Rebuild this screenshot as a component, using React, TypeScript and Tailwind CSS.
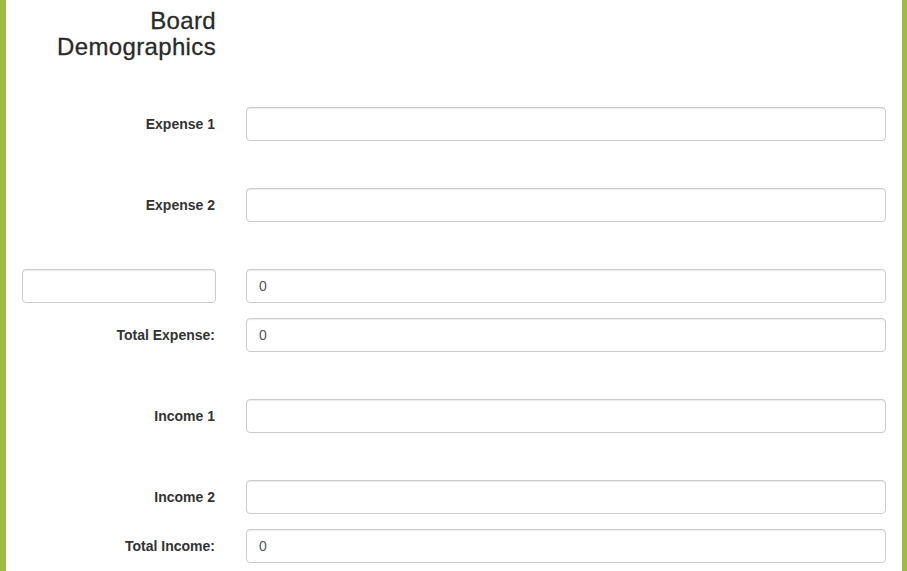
const rows: {
  label?: string;
  value?: string;
  spaced: boolean;
}[] = [
  { label: "Expense 1", spaced: true },
  { label: "Expense 2", spaced: true },
  { value: "0", spaced: true },
  { label: "Total Expense:", value: "0", spaced: false },
  { label: "Income 1", spaced: true },
  { label: "Income 2", spaced: true },
  { label: "Total Income:", value: "0", spaced: false },
];

function Field({ value }: { value?: string }) {
  return (
    <input
      type="text"
      readOnly
      defaultValue={value ?? ""}
      className="h-[34px] w-full rounded-[4px] border border-[#cccccc] bg-white px-3 text-[14px] text-[#555555] outline-none shadow-[inset_0_1px_1px_rgba(0,0,0,0.075)]"
    />
  );
}

export default function App() {
  return (
    <div
      className="min-h-[571px] w-[907px] border-l-[6px] border-r-[5px] border-[#9fba46] bg-white px-4 text-[#333333]"
      style={{ fontFamily: '"Liberation Sans", Arial, sans-serif' }}
    >
      <div className="grid grid-cols-[194px_1fr] gap-x-[30px]">
        <h3 className="pt-[8px] text-right text-[24px] leading-[26px] tracking-[0.35px] font-normal text-[#2a2a2a] [-webkit-text-stroke:0.3px_#2a2a2a]">
          Board
          <br />
          Demographics
        </h3>
        <div />
      </div>

      <div className="mt-[47px] flex flex-col">
        {rows.map((row, i) => (
          <div
            key={i}
            className={`grid grid-cols-[194px_1fr] items-center gap-x-[30px] ${
              i === 0 ? "" : row.spaced ? "mt-[47px]" : "mt-[15px]"
            }`}
          >
            {row.label ? (
              <label className="pr-[1px] text-right text-[14px] font-bold">
                {row.label}
              </label>
            ) : (
              <Field />
            )}
            <Field value={row.value} />
          </div>
        ))}
      </div>
    </div>
  );
}
